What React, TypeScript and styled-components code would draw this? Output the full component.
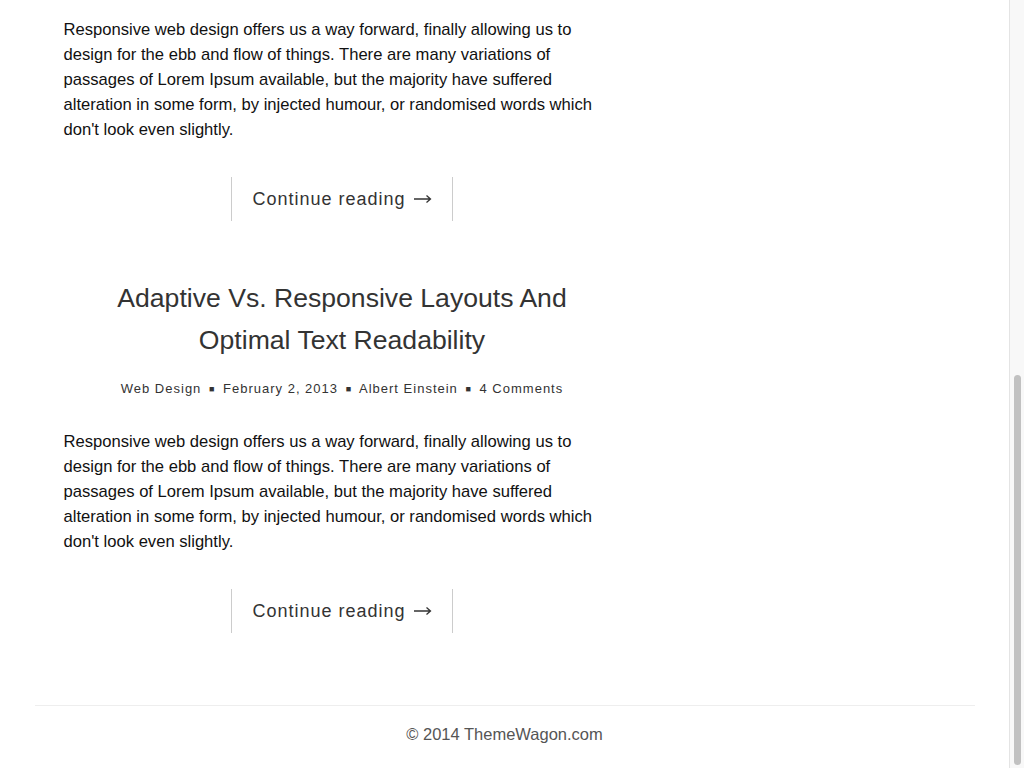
import React from "react"
import styled, { createGlobalStyle } from "styled-components"

const Global = createGlobalStyle`
html, body {
    margin: 0;
    padding: 0;
    background: #fff;
    overflow: hidden;
}
* { box-sizing: border-box; }
`

const Janela = styled.div`
display: flex;
height: 100vh;
font-family: "Liberation Sans", Arial, Helvetica, sans-serif;
color: #111;
`

const Pagina = styled.div`
flex: 1;
overflow: hidden;
padding-top: 17px;
`

const Trilho = styled.div`
width: 15px;
display: flex;
flex-direction: column;
justify-content: flex-end;
padding: 0 3px 3px 4px;
background: #f8f8f8;
border-left: 1px solid #e4e4e4;
`

const Cursor = styled.div`
height: 390px;
background: #c1c1c1;
border-radius: 4px;
`

const Container = styled.div`
width: 940px;
margin: 0 auto;
`

const Column = styled.main`
width: 557px;
margin-left: 29px;
`

const Post = styled.article<{ $primeiro?: boolean }>`
display: flex;
flex-direction: column;
align-items: center;
padding-top: ${props => props.$primeiro ? '0' : '56px'};
`

const Titulo = styled.h2`
margin: 0;
font-weight: 400;
font-size: 26.6px;
line-height: 42px;
color: #333;
text-align: center;
`

const Meta = styled.div`
margin-top: 18px;
font-size: 13px;
line-height: 20px;
letter-spacing: 1px;
color: #333;
text-align: center;
`

const Separador = styled.span`
margin: 0 3px;
font-size: 9px;
vertical-align: 1px;
`

const Texto = styled.p<{ $primeiro?: boolean }>`
align-self: stretch;
margin: ${props => props.$primeiro ? '0' : '30px 0 0'};
font-size: 16.6px;
line-height: 25px;
color: #111;
`

const Botao = styled.a`
margin-top: 35px;
height: 44px;
padding: 0 20px;
display: flex;
align-items: center;
gap: 8px;
border-left: 1px solid #ccc;
border-right: 1px solid #ccc;
font-size: 18px;
letter-spacing: 1px;
color: #333;
text-decoration: none;
`

const Seta = styled.svg`
width: 18px;
height: 10px;
`

const Rodape = styled.footer`
margin-top: 72px;
border-top: 1px solid #eee;
padding: 18px 0 24px;
text-align: center;
font-size: 16.5px;
line-height: 20px;
color: #555;
`

const resumo =
    "Responsive web design offers us a way forward, finally allowing us to design for the ebb and flow of things. There are many variations of passages of Lorem Ipsum available, but the majority have suffered alteration in some form, by injected humour, or randomised words which don't look even slightly."

function Continuar() {
    return (
        <Botao href="#">
            Continue reading
            <Seta viewBox="0 0 18 10">
                <path d="M0 5h16.5M12.5 1.5L16.5 5l-4 3.5" stroke="#333" strokeWidth="1.3" fill="none" />
            </Seta>
        </Botao>
    )
}

function Sep() {
    return <>{' '}<Separador>■</Separador>{' '}</>
}

export default function App() {
    return (
        <Janela>
            <Global />
            <Pagina>
                <Container>
                    <Column>
                        <Post $primeiro>
                            <Texto $primeiro>{resumo}</Texto>
                            <Continuar />
                        </Post>
                        <Post>
                            <Titulo>Adaptive Vs. Responsive Layouts And<br />Optimal Text Readability</Titulo>
                            <Meta>
                                Web Design<Sep />February 2, 2013<Sep />Albert Einstein<Sep />4 Comments
                            </Meta>
                            <Texto>{resumo}</Texto>
                            <Continuar />
                        </Post>
                    </Column>
                    <Rodape>© 2014 ThemeWagon.com</Rodape>
                </Container>
            </Pagina>
            <Trilho>
                <Cursor />
            </Trilho>
        </Janela>
    )
}
